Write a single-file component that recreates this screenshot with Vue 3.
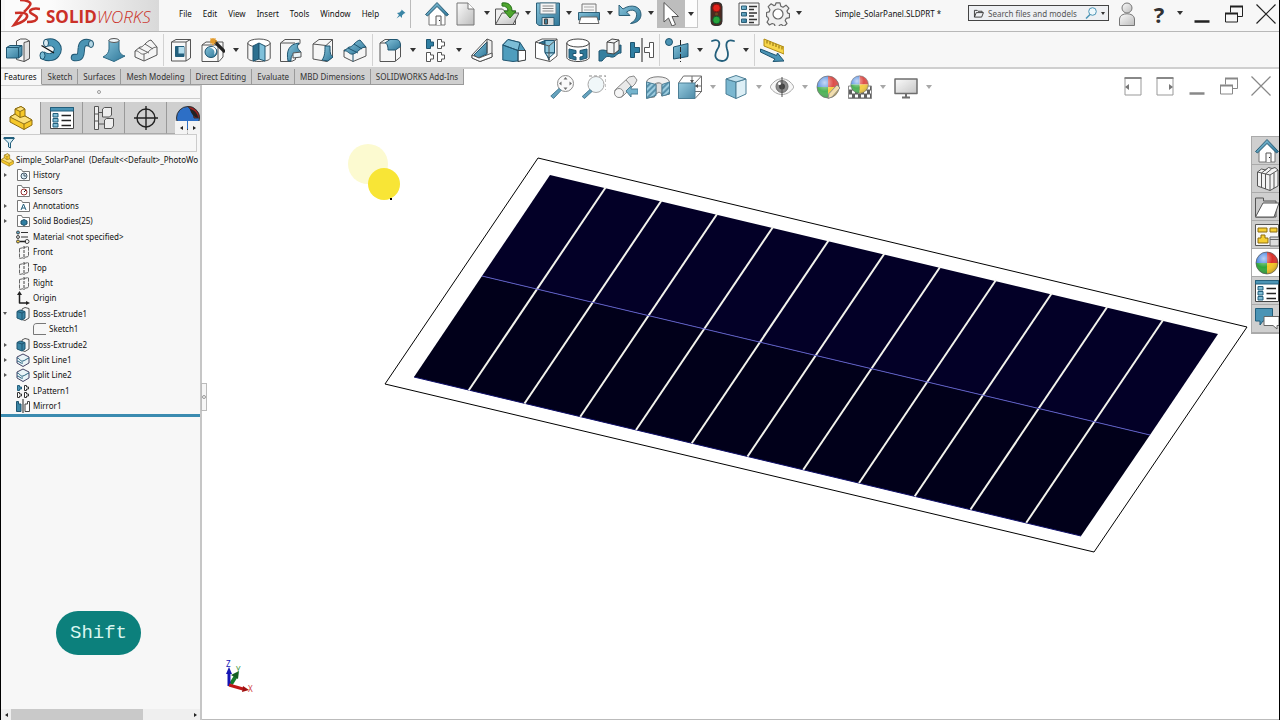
<script setup>
import { ref } from 'vue'

const menus = ['File', 'Edit', 'View', 'Insert', 'Tools', 'Window', 'Help']

const quickTools = [
  { icon: 'home', label: 'Home', wide: true },
  { icon: 'doc', label: 'New', menu: true },
  { icon: 'open', label: 'Open', menu: true },
  { icon: 'save', label: 'Save', menu: true },
  { icon: 'print', label: 'Print', menu: true },
  { icon: 'undo', label: 'Undo', menu: true },
  { icon: 'cursor', label: 'Select', menu: true, pressed: true },
  { icon: 'traffic', label: 'Rebuild', wider: true },
  { icon: 'props', label: 'File properties', wide: true },
  { icon: 'gear', label: 'Options', menu: true }
]

const commands = [
  { icon: 'extrude', label: 'Extruded boss' },
  { icon: 'revolve', label: 'Revolved boss' },
  { icon: 'sweep', label: 'Swept boss' },
  { icon: 'loft', label: 'Lofted boss' },
  { icon: 'boundary', label: 'Boundary boss', sep: true },
  { icon: 'cutExtrude', label: 'Extruded cut' },
  { icon: 'hole', label: 'Hole wizard', menu: true },
  { icon: 'cutRevolve', label: 'Revolved cut' },
  { icon: 'cutSweep', label: 'Swept cut' },
  { icon: 'cutLoft', label: 'Lofted cut' },
  { icon: 'cutBoundary', label: 'Boundary cut', sep: true },
  { icon: 'fillet', label: 'Fillet', menu: true },
  { icon: 'pattern', label: 'Linear pattern', menu: true },
  { icon: 'rib', label: 'Rib' },
  { icon: 'draft', label: 'Draft' },
  { icon: 'shell', label: 'Shell' },
  { icon: 'wrap', label: 'Wrap' },
  { icon: 'intersect', label: 'Intersect' },
  { icon: 'mirror', label: 'Mirror', sep: true },
  { icon: 'refGeom', label: 'Reference geometry', menu: true },
  { icon: 'curves', label: 'Curves', menu: true, sep: true },
  { icon: 'instant', label: 'Instant3D' }
]

const tabs = ['Features', 'Sketch', 'Surfaces', 'Mesh Modeling', 'Direct Editing', 'Evaluate', 'MBD Dimensions', 'SOLIDWORKS Add-Ins']
const activeTab = ref('Features')

const viewTools = [
  { icon: 'zoomFit', label: 'Zoom to fit' },
  { icon: 'zoomArea', label: 'Zoom to area' },
  { icon: 'prevView', label: 'Previous view' },
  { icon: 'section', label: 'Section view' },
  { icon: 'orient', label: 'View orientation', menu: true },
  { icon: 'style', label: 'Display style', menu: true },
  { icon: 'eye', label: 'Hide/show items', menu: true },
  { icon: 'appearance', label: 'Edit appearance' },
  { icon: 'scene', label: 'Apply scene', menu: true },
  { icon: 'monitor', label: 'View settings', menu: true }
]

const windowTools = [
  { icon: 'paneLeft', label: 'Collapse left' },
  { icon: 'paneRight', label: 'Collapse right' },
  { icon: 'minimize', label: 'Minimize document' },
  { icon: 'restore', label: 'Restore document' },
  { icon: 'close', label: 'Close document' }
]

const panelTabs = [
  { icon: 'part', label: 'Feature tree' },
  { icon: 'list', label: 'Properties' },
  { icon: 'config', label: 'Configurations' },
  { icon: 'target', label: 'Dimensions' },
  { icon: 'display', label: 'Display' }
]

const taskTabs = [
  { icon: 'home', label: 'Resources' },
  { icon: 'library', label: 'Design library' },
  { icon: 'folder', label: 'File explorer' },
  { icon: 'palette', label: 'View palette' },
  { icon: 'sphere', label: 'Appearances', active: true },
  { icon: 'list', label: 'Custom properties' },
  { icon: 'forum', label: 'Forum' }
]

const tree = [
  { name: 'History', icon: 'tHistory', arrow: 'closed' },
  { name: 'Sensors', icon: 'tSensors' },
  { name: 'Annotations', icon: 'tNotes', arrow: 'closed' },
  { name: 'Solid Bodies(25)', icon: 'tBodies', arrow: 'closed' },
  { name: 'Material <not specified>', icon: 'tMaterial' },
  { name: 'Front', icon: 'tPlane' },
  { name: 'Top', icon: 'tPlane' },
  { name: 'Right', icon: 'tPlane' },
  { name: 'Origin', icon: 'tOrigin' },
  { name: 'Boss-Extrude1', icon: 'tBoss', arrow: 'open' },
  { name: 'Sketch1', icon: 'tSketch', child: true },
  { name: 'Boss-Extrude2', icon: 'tBoss', arrow: 'closed' },
  { name: 'Split Line1', icon: 'tSplit', arrow: 'closed' },
  { name: 'Split Line2', icon: 'tSplit', arrow: 'closed' },
  { name: 'LPattern1', icon: 'tPattern' },
  { name: 'Mirror1', icon: 'tMirror' }
]

// solar panel: 11 gaps between the 12 cell columns
const gaps = Array.from({ length: 11 }, (_, i) => {
  const t = (i + 1) / 12
  return {
    x1: 550 + t * 669,
    y1: 174 + t * 159,
    x2: 413 + t * 669,
    y2: 377 + t * 159
  }
})

const ball = `
  <g stroke="none"><path fill="#3d7fe0" d="M12 12V1A11 11 0 0 0 1 12z"/><path fill="#d8322c" d="M12 12V1a11 11 0 0 1 11 11z"/>
  <path fill="#2fa53a" d="M12 12H1a11 11 0 0 0 11 11z"/><path fill="#f4c522" d="M12 12h11a11 11 0 0 1-11 11z"/>
  <circle cx="12" cy="12" r="11" fill="url(#shine)"/></g><circle cx="12" cy="12" r="11" stroke="#555" stroke-width=".7"/>`

const folderTop = '<path fill="#fff" stroke="#777" d="M1.5 12.5V1.5h4l1 2h7v9z"/>'

const icons = {
  home: '<path fill="#fff" stroke="#777" d="M4 12v11h16V12l-8-8z"/><path fill="#fafafa" stroke="#555" d="M11 23v-9h5v9"/><path stroke="#222" d="M14.500 18v1"/><path fill="url(#blue)" stroke="#2d5f77" d="M0.500 12.500L12 0.500l11.500 12-2 1.500L12 4.500 2.500 14z"/>',
  doc: '<path fill="url(#grey)" stroke="#777" d="M3 1h11l6 6v16H3z"/><path fill="#fff" stroke="#777" d="M14 1v6h6"/>',
  open: '<path fill="#eee" stroke="#555" d="M0.500 22.500V7h7l2 2h11v13.500z"/><path fill="url(#grey)" stroke="#555" d="M0.500 22.500L7 11h17l-6 11.500z"/><path fill="#4fa62e" stroke="#26701a" d="M7 1c6-1 10 2 10 8h4l-6 7-6-7h4c0-3-2-5-6-5z"/>',
  save: '<path fill="url(#blue)" stroke="#2d5f77" d="M0.500 1h23v22.500H3l-2.500-2z"/><path fill="#f5f5f5" stroke="#5b7f90" d="M4 1h16v11H4z"/><path stroke="#888" d="M6.500 4h11M6.500 6.500h11M6.500 9h11"/><path fill="#ddd" stroke="#2d5f77" d="M6 15.500h12v8H6z"/><path fill="#3f7e99" d="M8.500 17h3v5h-3z"/>',
  print: '<path fill="#f6f6f6" stroke="#777" d="M5 11V2h14v9"/><path stroke="#aaa" d="M7 5h10M7 8h10"/><path fill="url(#blue)" stroke="#2d5f77" d="M1.500 10.500h21V18h-21z"/><path fill="#fff" stroke="#666" d="M4 15h16l2 6.500H2z"/>',
  undo: '<path fill="url(#blue)" stroke="#2d5f77" d="M1 3v10.500h11L8.500 10c6-4 11-1 10 4-.5 3-2 5-6 7.500C20 21 23 17 23 12.500 23 4 13 1.500 5 7z"/>',
  cursor: '<path fill="#fff" stroke="#555" d="M5 .5v19.500l4.500-4 3.500 8 3.500-1.500L13 14.500h6.500z"/>',
  traffic: '<rect x="7" y="0.500" width="11" height="23" rx="4" fill="#4d2a20" stroke="#333"/><circle cx="12.500" cy="6" r="3.800" fill="#e2231a" stroke="#811"/><circle cx="12.500" cy="12" r="1.500" fill="#6b4b20" stroke="none"/><circle cx="12.500" cy="18" r="3.800" fill="#27a53b" stroke="#153"/>',
  props: '<path fill="#f7f7f7" stroke="#555" d="M2 1h20v22H2z"/><path fill="url(#blue)" stroke="#2d5f77" d="M4.500 4h5v3.500h-5zM4.500 10.500h5V14h-5zM4.500 17h5v3.500h-5z"/><path stroke="#333" stroke-width="1.300" d="M12 4.500h8M12 7.500h5M12 11h8M12 14h5M12 17.500h8M12 20.500h5"/>',
  gear: '<path fill="#f0f0f0" stroke="#666" stroke-width="1.200" d="M10 .8h4l.8 3.400 2.200 1 3-2 2.900 2.900-2 3 1 2.100 1.600.4v4l-3.300.8-1 2.200 1.800 2.900-2.900 2.900-2.800-1.900-1.800.7-.7 1.500h-3.600l-.8-2.400-2.200-.8-2.800 1.500L1 20.200l1.700-3-.9-2L.5 14.500v-4l2.600-.6.9-2.200-1.800-3L5 1.800l2.800 1.800 1.600-.6z"/><circle cx="12" cy="12" r="5" fill="#fff" stroke="#666" stroke-width="1.200"/>',
  user: '<circle cx="12" cy="6" r="5" fill="url(#grey)" stroke="#777"/><path fill="url(#grey)" stroke="#777" d="M4.500 23.500V17c0-7 15-7 15 0v6.500z"/>',

  extrude: '<path fill="#f6f6f6" stroke="#555" d="M10.500 3l4-2H20l3.500 2v17.500L18 23.500l-7.500-2z"/><path fill="#e2e2e2" stroke="#555" d="M18 4.500L23.500 3v17.500L18 23.500z"/><path fill="url(#blue)" stroke="#1f5570" d="M.5 9.500L4 7.500h12v10L12.500 20H.5z"/><path stroke="#1f5570" d="M.5 9.500h12V20M12.500 9.500l3.500-2"/>',
  revolve: '<path stroke="#1f5570" stroke-width="8" d="M8 5c9-3 15 5 10 11-3 4-9 4-14 1"/><path stroke="#4a97b8" stroke-width="6.200" d="M8 5c9-3 15 5 10 11-3 4-9 4-14 1"/><ellipse cx="8" cy="5" rx="2.500" ry="3.700" fill="#dcebf2" stroke="#1f5570"/><ellipse cx="4.500" cy="17.500" rx="2.500" ry="3.700" fill="#7cbdd6" stroke="#1f5570"/><path stroke="#111" stroke-width="1.300" d="M3.500 7.500L16 15"/>',
  sweep: '<path stroke="#1f5570" stroke-width="7.500" stroke-linecap="round" d="M4.500 19.500c8 1 6-5 7-10 .5-4 3-6 8-4.500"/><path stroke="#4a93b3" stroke-width="5.700" stroke-linecap="round" d="M4.500 19.500c8 1 6-5 7-10 .5-4 3-6 8-4.500"/><ellipse cx="21" cy="6" rx="2.500" ry="3.500" fill="#b5d8e6" stroke="#1f5570"/>',
  loft: '<path fill="url(#blue)" stroke="#2d6984" d="M7 2v9c0 3-2 6-6 8l11 4.500L23 18c-4-1-6-4-6-7V2z"/><ellipse cx="12" cy="2.500" rx="5" ry="2" fill="#eef6fa" stroke="#555"/>',
  boundary: '<path fill="#f5f5f5" stroke="#555" d="M1 13l5-4c3 1 6-6 11-7l6 7v8L10 23 1 19z"/><path stroke="#666" d="M1 13c4-1 5 4 9 3 5-1 7-7 13-7M10 16v7M5 10l10 5M11 6l8 5"/>',
  cutExtrude: '<path fill="#f8f8f8" stroke="#555" d="M2.500 4L7 1.500h14.500V20L17 23H2.500z"/><path stroke="#555" d="M2.500 4H17v19M17 4l4.500-2.500"/><path fill="#235f7c" stroke="#235f7c" d="M6.500 8.500H15v10H6.500z"/><path fill="#b3dcec" stroke="none" d="M9.500 9H15v6.500H9.500z"/>',
  hole: '<path fill="#f8f8f8" stroke="#555" d="M1 7l4-3h17v15l-4 4.500H1z"/><path stroke="#555" d="M1 7h16v16"/><ellipse cx="10" cy="14" rx="6" ry="5.500" fill="url(#blue)" stroke="#1f5570"/><path fill="#fff" stroke="none" d="M7 10c4-1 8 2 6 7 3-2 3-8-2-8z"/><path stroke="#222" stroke-width="3.200" d="M13 3l11 11"/><path stroke="#e29a2b" stroke-width="1.500" d="M12 0v7M9 3h7M9.500 .5l5 5M14.500 .5l-5 5"/>',
  cutRevolve: '<path fill="#f6f6f6" stroke="#555" d="M.8 5v15c0 2 5 3.500 11.200 3.500s11.200-1.500 11.200-3.500V5z"/><ellipse cx="12" cy="5" rx="11.200" ry="4" fill="#fff" stroke="#555"/><path fill="#2c6f8e" stroke="#1f5570" d="M12 5v16l-6 2V8z"/><path fill="#7fc0da" stroke="#1f5570" d="M12 5v16l6 2V8z"/>',
  cutSweep: '<path fill="#f6f6f6" stroke="#555" d="M1.500 5L6 1.500h15v4l-4.500 3v13l-4 2h-11z"/><path stroke="#555" d="M1.500 5H16"/><path fill="url(#blue)" stroke="#1f5570" d="M9 23C7 13 10 6 20 5c-3 4-1 6 2 9l-5 2c-4 0-5 2-5 7z"/><path fill="#e9f3f7" stroke="#555" d="M14 15l8-1v5l-8 1z"/>',
  cutLoft: '<path fill="#f6f6f6" stroke="#555" d="M2 6l6-4.500h13.500V19L16 23.500 2 21z"/><path stroke="#555" d="M2 6l13 1.500 6.500-6M15 7.500v16"/><path fill="url(#blue)" stroke="#1f5570" d="M14 8h5c0 6 0 9 3 11l-5 4-6-1c3-4 3-9 3-14z"/>',
  cutBoundary: '<path fill="#f5f5f5" stroke="#555" d="M1 12v7l9 4.500L23 18V9z"/><path fill="url(#blue)" stroke="#1f5570" d="M1 13l5-4c3 1 6-6 11-7l6 7c-6 0-8 6-13 7-4 1-5-4-9-3z"/><path stroke="#1f5570" d="M5 10l10 5M11 6l8 5M10 16v7.500"/>',
  fillet: '<path fill="#f6f6f6" stroke="#555" d="M2 5l5-3.500h11L22.500 6v13L17 23.500H2z"/><path fill="url(#blue)" stroke="#1f5570" d="M7 5l5-3.500h6c3 0 4.500 2 4.500 7l-5 3.500H10c0-4-1-7-3-7z"/><path stroke="#555" d="M2 5h5M17.500 12v11"/>',
  pattern: '<path fill="#2f7fa3" stroke="#1f5570" d="M2.500 1.500h4V4h3v4h-3v2.500h-4z"/><path fill="#fff" stroke="#555" d="M13.500 1.500h4V4h3v4h-3v2.500h-4zM2.500 14.500h4V17h3v4h-3v2.500h-4zM13.500 14.500h4V17h3v4h-3v2.500h-4z"/>',
  rib: '<path fill="#eee" stroke="#555" d="M2 17L17 1l5 2v16L10 23.500 2 20z"/><path fill="url(#blue)" stroke="#1f5570" d="M4 17L17 4v12l-9 4z"/><path fill="#fff" stroke="#555" d="M2 17l7 3 13-5v4L10 23.500 2 20zM17 1v14"/>',
  draft: '<path fill="#4f9dbd" stroke="#1f5570" d="M.8 7L6 1.500l12 3L23.500 13v9L11 23.500.8 22z"/><path fill="#7cbdd6" stroke="#1f5570" d="M.8 7L6 1.500 18 4.500l-2 8z"/><path fill="#fff" stroke="#444" d="M16 12.500h7.500v9.500L16 23.500z"/><path stroke="#1f5570" d="M16 12.500v11M.8 7L16 12.500"/>',
  shell: '<path fill="#fff" stroke="#555" d="M1.500 4L8 1h15v17l-7 5.500L1.500 20z"/><path fill="#2e7391" stroke="#1f5570" d="M5 5l6-2.500v11L15 22V8z"/><path fill="#8cc7dd" stroke="#1f5570" d="M11 2.500h9.500V15H11z"/><path fill="#b5dcea" stroke="#1f5570" d="M11 15h9.500L15 20z"/><path stroke="#555" d="M1.500 4L15 8v15M15 8l8-7"/>',
  wrap: '<path fill="#fff" stroke="#444" d="M.8 5v14.500c0 2 5 4 11.200 4s11.200-2 11.200-4V5z"/><ellipse cx="12" cy="5" rx="11.200" ry="4" fill="#fff" stroke="#444"/><path fill="#2d7899" stroke="#1f5570" d="M3 11l7 1.500v3H7v3l3 .5v3l-7-2zM21 11l-7 1.500v3h3v3l-3 .5v3l7-2z"/>',
  intersect: '<path fill="#367f9f" stroke="#1f5570" d="M1 13c5-3 8 2 12-2s6-3 10-4v8c-5 0-5 5-10 4-5-2-6 1-9 4H1z"/><path fill="#f4f4f4" stroke="#444" d="M9 4l5-3 7 1v10l-5 4-7-1z"/><path stroke="#444" d="M9 4l7 1v11M16 5l5-3"/>',
  mirror: '<path fill="#2f7fa3" stroke="#1f5570" d="M.5 4.500h4v5h5v5h-5v5h-4z"/><path fill="#fff" stroke="#555" d="M23.500 4.500h-4v5h-5v5h5v5h4z"/><path stroke="#222" d="M12 0v24"/>',
  refGeom: '<circle cx="4" cy="4" r="3.500" fill="#4b94b5" stroke="#1f5570"/><path fill="url(#blue)" stroke="#1f5570" d="M8.500 9L23 5.500v13L8.500 21z"/><path stroke="#222" stroke-dasharray="5 2" d="M15.500 2v22"/>',
  curves: '<path stroke="#235f7c" stroke-width="1.800" stroke-linecap="round" d="M1 3c8-3 9 3 5 9-4 7 0 11 5 11 6 0 7-6 5-12-2-7 1-10 7-8"/>',
  instant: '<path fill="#f7d64b" stroke="#b08b15" d="M4 1l20 8v7L4 8z"/><path stroke="#8b6b0b" d="M7 2.500v3M10 3.500v3M13 5v3M16 6v3M19 7.500v3M22 8.500v3"/><path fill="#4b94b5" stroke="#1f5570" d="M.5 11l16 6.500 1-2.500 6.500 8-11 .5 2-2.500L.5 14z"/>',

  zoomFit: '<circle cx="15.500" cy="8.500" r="8" fill="#fafafa" stroke="#777"/><path fill="#555" stroke="none" d="M15.500 2l2 2.500h-4zM15.500 15l2-2.500h-4zM9 8.500L11.500 6.500v4zM22 8.500l-2.500-2v4z"/><path fill="#4b94b5" stroke="#2d6984" d="M9 13.500l2 2-7.500 8L.8 21z"/>',
  zoomArea: '<path stroke="#777" stroke-dasharray="3 2" d="M7 1h17v14"/><circle cx="14" cy="9.500" r="8" fill="#eef6f9" stroke="#999"/><path fill="#4b94b5" stroke="#2d6984" d="M8 14.500l2 2-7.500 7L.2 21.500z"/>',
  prevView: '<path fill="#e6e6e6" stroke="#777" d="M1 15L15 2l5-1 3 4-2 4-12 12c-4 4-10-1-8-6z"/><circle cx="5" cy="18" r="4.500" fill="#f5f5f5" stroke="#777"/><path stroke="#777" d="M12 5l6 7"/><path fill="#5da7c5" stroke="#2d6984" d="M12 16l5-5v3h7v5h-7v3z"/>',
  section: '<path fill="#eee" stroke="#666" d="M.5 7C1 0 23 0 23.500 7v12l-8 2V9.500c-1-2-6-2-7 0V22l-8 1z"/><path fill="#d8d8d8" stroke="#777" d="M10 9.500c1-2 5-2 6 0V19l-3-2-3 2z"/><path fill="url(#hatch)" stroke="#2d6984" d="M.5 7L10 9.500v11L.5 23.500zM16 9.500L23.500 7v12L16 21z"/>',
  orient: '<path stroke="#555" d="M5.500 1h18v16M.5 8l5-7M17 8l6.500-7M17 23.500l6.500-7H17M14 1v7M24 11h-7"/><path fill="url(#blue)" stroke="#2d6984" d="M.5 8H17v15.500H.5z"/><path fill="#333" stroke="none" d="M14 8l-2-3h4zM17 11l3-2v4z"/>',
  style: '<path fill="#63abc8" stroke="#2d6984" d="M2 4l10 3v16.500L2 19z"/><path fill="#d8edf5" stroke="#2d6984" d="M12 7l10-3v15l-10 4.500z"/><path fill="#b8dcea" stroke="#2d6984" d="M2 4l10-3.500L22 4 12 7z"/>',
  eye: '<path fill="#f6f6f6" stroke="#999" d="M0 12c6-11 18-11 24 0-6 10-18 10-24 0z"/><circle cx="12" cy="11.500" r="6" fill="#777" stroke="#555"/><circle cx="12" cy="11.500" r="3" fill="#222" stroke="none"/><circle cx="9.500" cy="8.500" r="1.500" fill="#fff" stroke="none"/><path stroke="#333" d="M12 2v20"/>',
  sphere: ball,
  appearance: ball + '<path fill="#f0d9a0" stroke="#777" d="M12 23.500l1-5L21 10l3 3-8 9z"/>',
  scene: '<path fill="#444" stroke="#777" d="M.5 11h23v12.500H.5z"/><path stroke="#fff" stroke-width="3" stroke-dasharray="3 3" d="M1 13h22M4 17h19M1 21h22"/><g transform="translate(2 0) scale(.8)">' + ball + '</g>',
  monitor: '<path fill="url(#grey)" stroke="#555" stroke-width="1.500" d="M1 4h22v14.500H1z"/><path stroke="#555" stroke-width="2" d="M12 19v3M8 22.500h8"/>',
  paneLeft: '<path stroke="#999" d="M4 4h16v17H4z"/><path stroke="#888" stroke-width="2" d="M3.500 4h17"/><path fill="#777" stroke="none" d="M4 13l4-3v6z"/>',
  paneRight: '<path stroke="#999" d="M4 4h16v17H4z"/><path stroke="#888" stroke-width="2" d="M3.500 4h17"/><path fill="#777" stroke="none" d="M20 13l-4-3v6z"/>',
  minimize: '<path stroke="currentColor" stroke-width="2.500" d="M4.500 19.500h15"/>',
  restore: '<path stroke="currentColor" d="M8.500 10.500V4.500h12v10h-5"/><path stroke="currentColor" stroke-width="2" d="M8 4.500h13M3 11.500h13"/><path stroke="currentColor" d="M3.500 11v9h12v-9"/>',
  close: '<path stroke="currentColor" stroke-width="1.200" d="M2.500 2.500l19 19M21.500 2.500l-19 19"/>',

  part: '<path fill="#f6c829" stroke="#8d6d12" d="M1 11l5-3V3l6-2.500L16 3v7l7 4v5l-8 4.500L1 16z"/><path fill="#fbe07b" stroke="#8d6d12" d="M6 3l6-2.500L16 3l-5 2.500zM1 11l5-3 5 3.500 5-1.500 7 4-8 4z"/><path stroke="#8d6d12" d="M11 5.500v6M15 18v5.500"/>',
  list: '<path fill="#fff" stroke="#444" d="M.5 1.500h23v21H.5z"/><path fill="#4b94b5" stroke="#235f7c" d="M.5 1.500h23V5H.5z"/><path fill="#7fbdd6" stroke="#235f7c" d="M3 7.500h5v3.500H3zM3 12.500h5V16H3zM3 17.500h5V21H3z"/><path stroke="#222" stroke-width="1.400" d="M11.500 9.500H21M11.500 14.500H21M11.500 19.500H21"/>',
  config: '<path fill="#eee" stroke="#555" d="M2.500 .5h4v23h-4z"/><path fill="#eee" stroke="#555" d="M10.500 3l2-1.500h7V9l-2 2h-7zM12.500 14l2-1.500h7V20l-2 2.500h-7z"/><path stroke="#555" d="M6.500 6.500h4M6.500 18h6M2.500 8h4M2.500 15h4"/>',
  target: '<circle cx="12" cy="12" r="9" stroke="#222" stroke-width="1.400"/><path stroke="#222" stroke-width="1.400" d="M12 0v24M0 12h24"/>',
  display: '<circle cx="12" cy="12" r="11.500" fill="#2d6fc6" stroke="#333"/><path fill="#a32020" stroke="#333" d="M12 .5A11.500 11.500 0 0 1 23.500 12H18c0-4-3-8-6-11.500z"/><path fill="#222" stroke="none" d="M14 3c5 1 8 5 8 9-4-1-7-4-8-9z"/>',
  library: '<path fill="#f3f3f3" stroke="#555" d="M2.500 5l4-3 4 1 3-2.500 3.500 1L20 .500 23 3v16l-8 4.500L2.500 19z"/><path stroke="#555" d="M2.500 5L15 8l8-5M15 8v15.500M6.500 6v14.500M10.500 7v15M6.500 6l5-4M10.500 7l6-5M19 6v15"/>',
  folder: '<path fill="#c9c9c9" stroke="#555" d="M.5 22V3h8v3H21v16z"/><path fill="#fff" stroke="#555" d="M.5 22L8 8h16l-5 14z"/>',
  palette: '<path fill="#f7f7f7" stroke="#555" d="M.5 1.500h23v21H.5z"/><path fill="#f6cf32" stroke="#8d6d12" d="M3 5h9v4H3zM15 5h7v4h-7zM6 12h4v3h3v5H3v-5h3z"/><path fill="#ddd" stroke="#666" d="M15 14h9v9h-9z"/><path stroke="#666" d="M15 16.500h9"/>',
  forum: '<path fill="#4b94b5" stroke="#235f7c" d="M.5 1.500h17V14H8l-3 4v-4H.5z"/><path fill="#fff" stroke="#666" d="M9 9.500h15v9h-2V22l-4-3.500H9z"/>'
}

const treeIcons = {
  tHistory: folderTop + '<circle cx="8" cy="8" r="3" fill="#dceef5" stroke="#456"/><path stroke="#456" d="M8 6v2h2"/>',
  tSensors: folderTop + '<circle cx="8" cy="8" r="3" fill="#fff" stroke="#933"/><path stroke="#222" d="M8 8l2-2"/>',
  tNotes: folderTop + '<path stroke="#235f7c" d="M5 11l2.500-6L10 11M6 9h3"/>',
  tBodies: folderTop + '<path fill="#2f7fa3" stroke="#1f4f66" d="M5 7l3-1.500L11 7v3l-3 1.500L5 10z"/>',
  tMaterial: '<path stroke="#333" d="M5 2.500h7M5 7h7"/><path stroke="#222" stroke-width="1.500" d="M4 11.500h6"/><circle cx="2" cy="2.500" r="1.500" fill="#5da7c5"/><circle cx="2" cy="7" r="1.500" fill="#ddd"/><circle cx="2" cy="11.500" r="1.500" fill="#f2cc3a"/><circle cx="11" cy="11.500" r="2"/>',
  tPlane: '<path stroke="#666" d="M3.500 3.500v10l9-2v-10z" stroke-dasharray="4 1"/><path stroke="#444" d="M8 1v13" stroke-dasharray="3 1"/>',
  tOrigin: '<path stroke="#222" stroke-width="1.500" d="M3.500 3v9H12"/><path fill="#222" stroke="none" d="M3.500 0L6 4H1zM14 12l-4-2v4z"/>',
  tBoss: '<path fill="#f6f6f6" stroke="#555" d="M6 2l3-1.500 4 1V11l-4 2.500-3-1z"/><path fill="#3a85a5" stroke="#1f5570" d="M1 4.500L4 3l5 1.500V11l-3 2-5-2z"/><path stroke="#1f5570" d="M1 4.500L6 6v6.500M6 6l3-1.500"/>',
  tSketch: '<path stroke="#777" d="M14 1.500H5C2 1.500 1.500 3 1.500 5v7.500H14"/>',
  tSplit: '<path fill="#e9f3f7" stroke="#446" d="M1 4l6-3 6 3v6l-6 3.500L1 10z"/><path stroke="#235f7c" d="M1 5c3 0 3 4 6 3s3-2 6-3M1 8c3 0 3 3 6 2"/>',
  tPattern: '<path fill="#4b94b5" stroke="#235f7c" d="M1.500 1.500h2V3h2v2h-2v1.500h-2z"/><path fill="#fff" stroke="#333" d="M8.500 1.500h2V3h2v2h-2v1.500h-2zM1.500 8.500h2V10h2v2h-2v1.500h-2zM8.500 8.500h2V10h2v2h-2v1.500h-2z"/>',
  tMirror: '<path fill="#3a85a5" stroke="#1f5570" d="M.5 2.500h2V5H5v7.500H.5z"/><path fill="#fff" stroke="#444" d="M13.500 2.500h-2V5H9v7.500h4.500z"/><path stroke="#222" d="M7 0v14"/>'
}
</script>

<template>
  <div class="app">
    <!-- shared paint -->
    <svg class="defs" width="0" height="0" aria-hidden="true">
      <defs>
        <linearGradient id="blue" x1="0" y1="0" x2="1" y2="1">
          <stop offset="0" stop-color="#86c3da" />
          <stop offset="1" stop-color="#2f7799" />
        </linearGradient>
        <linearGradient id="grey" x1="0" y1="0" x2="1" y2="1">
          <stop offset="0" stop-color="#fbfbfb" />
          <stop offset="1" stop-color="#bcbcbc" />
        </linearGradient>
        <radialGradient id="shine" cx=".35" cy=".3" r=".8">
          <stop offset="0" stop-color="#fff" stop-opacity=".65" />
          <stop offset=".5" stop-color="#fff" stop-opacity="0" />
          <stop offset="1" stop-color="#000" stop-opacity=".3" />
        </radialGradient>
        <pattern id="hatch" width="4" height="4" patternUnits="userSpaceOnUse" patternTransform="rotate(45)">
          <rect width="4" height="4" fill="#8cc4da" />
          <rect width="2" height="4" fill="#3c7f9e" />
        </pattern>
      </defs>
    </svg>

    <!-- Title bar -->
    <header class="titlebar">
      <div class="brand">
        <svg class="brand-mark" viewBox="0 0 29 27" aria-hidden="true">
          <path d="M9 0c6 0 12 2 10 5-1 2-3 4-6 7" />
          <path d="M4 13c8-1 13 0 12 4-1 3-6 6-13 8l8-11" />
          <path d="M29 9c-6-1-10 0-10 3 0 2 7 3 7 6 0 3-5 4-10 4" />
        </svg>
        <span class="brand-name"><b>SOLID</b><i>WORKS</i></span>
      </div>
      <nav class="menus">
        <button v-for="m in menus" :key="m" type="button">{{ m }}</button>
        <button class="pin" type="button" aria-label="Pin menu">
          <svg viewBox="0 0 10 10" width="10" height="10">
            <path fill="#3a85a5" d="M5.500.5l4 3.500-1.500.5-2 2L6 9 4 7 .5 9.500 3 6 1 4l2.500-.500 2-2z" />
          </svg>
        </button>
      </nav>
      <div class="quick">
        <template v-for="t in quickTools" :key="t.icon">
          <button class="tool" :class="{ wide: t.wide, wider: t.wider, pressed: t.pressed }" type="button" :aria-label="t.label">
            <svg class="glyph" viewBox="0 0 24 24" v-html="icons[t.icon]"></svg>
          </button>
          <button v-if="t.menu" class="drop" :class="{ boxed: t.pressed }" type="button" :aria-label="t.label + ' menu'"></button>
        </template>
      </div>
      <div class="title">Simple_SolarPanel.SLDPRT *</div>
      <div class="search">
        <svg viewBox="0 0 12 10" width="11" height="9" aria-hidden="true">
          <path fill="none" stroke="#333" d="M1.500 9V1.500h3l1 1H10V4M1.500 9l2-5h8l-2 5z" />
        </svg>
        <input type="text" placeholder="Search files and models" aria-label="Search files and models" />
        <button class="search-go" type="button" aria-label="Search">
          <svg viewBox="0 0 12 12" width="12" height="12">
            <circle cx="7.500" cy="4.500" r="3.800" fill="#eef8fc" stroke="#4b94b5" />
            <path stroke="#4b94b5" stroke-width="1.500" d="M5 7.500l-4 4" />
          </svg>
        </button>
        <button class="search-drop" type="button" aria-label="Search scope"></button>
      </div>
      <div class="window-buttons">
        <button class="tool wider" type="button" aria-label="Sign in">
          <svg class="glyph" viewBox="0 0 24 24" v-html="icons.user"></svg>
        </button>
        <button class="tool help" type="button" aria-label="Help">?</button>
        <button class="drop" type="button" aria-label="Help menu"></button>
        <button v-for="n in ['minimize', 'restore', 'close']" :key="n" class="tool frame" type="button" :aria-label="n">
          <svg class="glyph" viewBox="0 0 24 24" v-html="icons[n]"></svg>
        </button>
      </div>
    </header>

    <!-- Feature commands -->
    <div class="commands">
      <template v-for="c in commands" :key="c.icon">
        <button class="command" type="button" :aria-label="c.label">
          <svg class="glyph" viewBox="0 0 24 24" v-html="icons[c.icon]"></svg>
        </button>
        <button v-if="c.menu" class="drop" type="button" :aria-label="c.label + ' menu'"></button>
        <span v-if="c.sep" class="sep"></span>
      </template>
    </div>

    <main class="workspace">
      <nav class="tabs">
        <button
          v-for="t in tabs"
          :key="t"
          type="button"
          :class="{ active: activeTab === t }"
          @click="activeTab = t"
        >{{ t }}</button>
      </nav>

      <!-- Feature manager -->
      <aside class="sidebar">
        <div class="splitter"><span></span></div>
        <div class="panel-tabs">
          <button v-for="(p, i) in panelTabs" :key="p.icon" type="button" :class="{ active: i === 0 }" :aria-label="p.label">
            <svg class="glyph" viewBox="0 0 24 24" v-html="icons[p.icon]"></svg>
          </button>
          <div class="tab-scroll">
            <button class="left" type="button" aria-label="Scroll tabs left"></button>
            <button class="right" type="button" aria-label="Scroll tabs right"></button>
          </div>
        </div>
        <div class="filter">
          <svg viewBox="0 0 12 12" width="12" height="12" aria-hidden="true">
            <path fill="#d5ecf5" stroke="#235f7c" d="M.5 1h11L7.500 6v5l-2-1V6z" />
            <path stroke="#235f7c" stroke-width="2" d="M1 1h10" />
          </svg>
          <input type="text" aria-label="Filter tree" />
        </div>
        <ul class="tree">
          <li class="root">
            <svg class="glyph" viewBox="0 0 24 24" v-html="icons.part"></svg>
            <span>Simple_SolarPanel&nbsp; (Default&lt;&lt;Default&gt;_PhotoWo</span>
          </li>
          <li v-for="n in tree" :key="n.name" :class="{ child: n.child }">
            <span class="twist" :class="n.arrow"></span>
            <svg class="glyph" viewBox="0 0 14 14" v-html="treeIcons[n.icon]"></svg>
            <span>{{ n.name }}</span>
          </li>
        </ul>
        <div class="rollback"></div>
        <div class="keycast">Shift</div>
        <div class="scrollbar">
          <button class="left" type="button" aria-label="Scroll left"></button>
          <div class="track"><div class="thumb"></div></div>
          <button class="right" type="button" aria-label="Scroll right"></button>
        </div>
        <button class="handle" type="button" aria-label="Collapse panel"></button>
      </aside>

      <!-- Graphics area -->
      <section class="viewport">
        <svg class="model" viewBox="202 69 1077 650" aria-hidden="true">
          <circle cx="368" cy="164" r="20" fill="#fcfad0" />
          <circle cx="384" cy="184" r="16" fill="#f8e536" />
          <rect x="390" y="198" width="2" height="2" fill="#000" />
          <path d="M538 158L1247 327L1094 552L385 384z" fill="#fff" stroke="#000" />
          <path d="M550 175L1218 334L1150 435L482 276z" fill="#030027" />
          <path d="M482 276L1150 435L1081 536L414 377z" fill="#01001a" />
          <path d="M414 377L1081 536" stroke="#10106a" />
          <line v-for="(g, i) in gaps" :key="i" v-bind="g" stroke="#f3f3ec" stroke-width="2" />
          <path d="M482 276L1150 435" stroke="#5c5cc4" />
        </svg>

        <div class="view-tools">
          <template v-for="v in viewTools" :key="v.icon">
            <button class="command" type="button" :aria-label="v.label">
              <svg class="glyph" viewBox="0 0 24 24" v-html="icons[v.icon]"></svg>
            </button>
            <button v-if="v.menu" class="drop" type="button" :aria-label="v.label + ' menu'"></button>
          </template>
        </div>

        <div class="doc-buttons">
          <button v-for="w in windowTools" :key="w.icon" class="command" type="button" :aria-label="w.label">
            <svg class="glyph" viewBox="0 0 24 24" v-html="icons[w.icon]"></svg>
          </button>
        </div>

        <div class="task-pane">
          <button v-for="t in taskTabs" :key="t.label" type="button" :class="{ active: t.active }" :aria-label="t.label">
            <svg class="glyph" viewBox="0 0 24 24" v-html="icons[t.icon]"></svg>
          </button>
        </div>

        <svg class="triad" viewBox="0 0 36 36" width="36" height="36" aria-hidden="true">
          <path stroke="#157a2a" stroke-width="4" d="M9 26l5-8" />
          <path fill="#145f22" d="M9 17l8-4-1 8z" />
          <path stroke="#1414b4" stroke-width="3" d="M7 28V14" />
          <path fill="#1414b4" d="M7 9l3 7H4z" />
          <path stroke="#c01818" stroke-width="3" d="M7 27l14 4" />
          <path fill="#a01010" d="M27 32l-7 2 1-6z" />
          <text x="4" y="9" fill="#1414b4">Z</text>
          <text x="14" y="15" fill="#4a9a4a">Y</text>
          <text x="26" y="34" fill="#d04040">X</text>
        </svg>
      </section>
    </main>
  </div>
</template>

<style>
html,
body,
#app {
  height: 100%;
  margin: 0;
}
</style>

<style scoped>
.app {
  height: 100%;
  box-sizing: border-box;
  display: flex;
  flex-direction: column;
  border: solid #000;
  border-width: 0 1px;
  background: #f7f7f7;
  color: #222;
  font-family: 'Noto Sans', 'Open Sans', sans-serif;
  font-size: 8px;
  line-height: 12px;
  overflow: hidden;
}

.defs {
  position: absolute;
}

button,
input {
  font: inherit;
  color: inherit;
  border: 0;
  padding: 0;
  margin: 0;
  background: none;
}

button {
  display: flex;
  align-items: center;
  justify-content: center;
  flex-shrink: 0;
}

.glyph {
  width: 24px;
  height: 24px;
  fill: none;
  stroke: #444;
  stroke-linejoin: round;
  flex-shrink: 0;
}

/* ===== Title bar ===== */
.titlebar {
  display: flex;
  align-items: stretch;
  height: 31px;
  flex-shrink: 0;
  padding-left: 4px;
  border-bottom: 1px solid #b8b8b8;
}

.brand {
  display: flex;
  width: 148px;
  padding-left: 6px;
  background: linear-gradient(90deg, #fbfbfb 30%, #d9d9d9);
}

.brand-mark {
  width: 29px;
  height: 27px;
  fill: none;
  stroke: #cb3027;
  stroke-width: 2.5;
}

.brand-name {
  margin-left: 6px;
  padding-top: 2px;
  color: #cb3027;
  font-family: 'Open Sans', 'Noto Sans', sans-serif;
  font-size: 17px;
  line-height: 30px;
}

.brand-name i {
  font-weight: 300;
}

.menus {
  display: flex;
  align-items: center;
  gap: 11px;
  width: 231px;
  height: 27px;
  padding-left: 20px;
  box-sizing: content-box;
  color: #111;
}

.menus .pin {
  margin-left: 6px;
}

.quick {
  display: flex;
  height: 28px;
  padding-left: 11px;
  border-left: 1px solid #bbb;
}

.tool {
  width: 28px;
  height: 27px;
}

.tool.wide {
  width: 30px;
}

.tool.wider {
  width: 36px;
}

.tool.pressed {
  height: 28px;
  background: #bdbdbd;
}

.drop {
  width: 13px;
  height: 26px;
}

.drop::before,
.search-drop::before {
  content: '';
  border: 3px solid transparent;
  border-top: 4px solid #333;
  border-bottom: 0;
}

.drop.boxed {
  height: 28px;
  box-sizing: border-box;
  border: solid #c8c8c8;
  border-width: 0 1px 1px 0;
  background: #fdfdfd;
}

.title {
  flex: 1;
  min-width: 100px;
  padding-left: 30px;
  line-height: 27px;
  white-space: nowrap;
  color: #111;
}

.search {
  display: flex;
  align-items: center;
  gap: 4px;
  width: 141px;
  height: 16px;
  box-sizing: border-box;
  margin-top: 5px;
  padding: 0 3px 0 4px;
  border: 1px solid #444;
  background: #eef0f3;
  flex-shrink: 0;
}

.search input {
  flex: 1;
  min-width: 0;
  height: 14px;
}

.search input::placeholder {
  color: #555;
  opacity: 1;
}

.search svg {
  fill: none;
}

.search-drop::before {
  border-width: 2px;
  border-top-width: 3px;
}

/* the close button runs under the window edge */
.window-buttons {
  display: flex;
  margin-right: -3px;
}

.window-buttons .help {
  color: #333;
  font-size: 22px;
  font-weight: 700;
  line-height: 30px;
}

.tool.frame {
  width: 32px;
  color: #222;
}

/* ===== Command bar ===== */
.commands {
  display: flex;
  align-items: center;
  height: 35px;
  flex-shrink: 0;
  padding-left: 1px;
  border-bottom: 2px solid #cfcfcf;
}

.command {
  width: 32px;
  height: 34px;
}

.commands .drop,
.view-tools .drop {
  width: 14px;
}

.sep {
  width: 1px;
  height: 32px;
  margin: 0 1px;
  background: #d2d2d2;
}

/* ===== Workspace ===== */
.workspace {
  position: relative;
  flex: 1;
  min-height: 0;
  display: flex;
}

.tabs {
  position: absolute;
  top: 0;
  left: 0;
  z-index: 2;
  display: flex;
  height: 16px;
}

.tabs button {
  padding: 0 5px;
  border: solid #9a9a9a;
  border-width: 0 1px 1px 0;
  background: #cfcfcf;
  color: #333;
}

.tabs button.active {
  padding: 0 5px 0 3px;
  border-bottom-color: #f7f7f7;
  background: #f7f7f7;
  color: #111;
}

/* ===== Sidebar ===== */
.sidebar {
  position: relative;
  display: flex;
  flex-direction: column;
  width: 199px;
  flex-shrink: 0;
  padding-top: 16px;
  border-right: 2px solid #c6c6c6;
}

.splitter {
  display: flex;
  align-items: center;
  justify-content: center;
  height: 12px;
  margin-bottom: 3px;
  padding-right: 4px;
  border: solid #ccc;
  border-width: 1px 0;
}

.splitter span {
  width: 2px;
  height: 2px;
  border: 1px solid #999;
  border-radius: 50%;
}

.panel-tabs {
  position: relative;
  display: flex;
  height: 32px;
  overflow: hidden;
}

.panel-tabs > button {
  width: 42px;
  box-sizing: border-box;
  border-right: 1px solid #999;
  border-bottom: 1px solid #aaa;
  background: #cfcfcf;
}

.panel-tabs > button.active {
  width: 40px;
  border-bottom: 0;
  background: #f7f7f7;
}

.tab-scroll {
  position: absolute;
  right: 0;
  bottom: 0;
  display: flex;
  gap: 1px;
  height: 13px;
}

.tab-scroll button {
  width: 12px;
  background: #f4f4f4;
}

.left::before,
.right::before {
  content: '';
  border: 2px solid transparent;
}

.left::before {
  border-right: 3px solid #222;
  border-left: 0;
}

.right::before {
  border-left: 3px solid #222;
  border-right: 0;
}

.filter {
  display: flex;
  align-items: center;
  height: 16px;
  margin-right: 3px;
  padding-left: 2px;
  border: solid #ccc;
  border-width: 1px 1px 1px 0;
}

.filter svg {
  fill: none;
}

.filter input {
  flex: 1;
  min-width: 0;
}

/* 17 equal rows */
.tree {
  display: grid;
  grid-auto-rows: 1fr;
  height: 262px;
  margin: 0;
  padding: 0;
  list-style: none;
  color: #111;
}

.tree li {
  display: flex;
  align-items: center;
  white-space: nowrap;
}

.tree .glyph {
  width: 14px;
  height: 14px;
  margin-right: 3px;
}

.tree .root .glyph {
  width: 13px;
  margin-right: 2px;
}

.tree .twist {
  width: 7px;
  margin-left: 2px;
  margin-right: 6px;
  display: flex;
}

.tree .child .twist {
  margin-right: 22px;
}

.twist.closed::before {
  content: '';
  margin-left: 1px;
  border: 2px solid transparent;
  border-left: 3px solid #555;
  border-right: 0;
}

.twist.open::before {
  content: '';
  border: 2px solid transparent;
  border-top: 3px solid #555;
  border-bottom: 0;
}

.rollback {
  height: 3px;
  background: #3b8bb0;
}

.keycast {
  align-self: flex-start;
  margin: auto 0 54px 55px;
  padding: 0 14px;
  border-radius: 22px;
  background: #0c807c;
  color: #d9f5f0;
  font-family: 'Liberation Mono', monospace;
  font-size: 19px;
  line-height: 44px;
}

.scrollbar {
  display: flex;
  height: 11px;
  background: #efefef;
}

.scrollbar button {
  width: 10px;
}

.scrollbar .track {
  flex: 1;
}

.scrollbar .thumb {
  width: 74%;
  height: 100%;
  background: #c9c9c9;
}

.handle {
  position: absolute;
  z-index: 1;
  right: -7px;
  top: 314px;
  width: 6px;
  height: 28px;
  border: 1px solid #bbb;
  background: #f7f7f7;
}

.handle::before {
  content: '';
  width: 2px;
  height: 2px;
  border: 1px solid #999;
  border-radius: 50%;
  flex-shrink: 0;
}

/* ===== Graphics area ===== */
.viewport {
  position: relative;
  flex: 1;
  min-width: 0;
  background: #fff;
  border-bottom: 1px solid #bbb;
}

.model {
  position: absolute;
  inset: 0;
  width: 100%;
  height: 100%;
}

.view-tools {
  position: relative;
  display: flex;
  align-items: center;
  justify-content: center;
  height: 35px;
  opacity: 0.85;
}

.view-tools .drop::before {
  border-top-color: #999;
}

.doc-buttons {
  position: absolute;
  top: 0;
  right: 2px;
  display: flex;
  color: #888;
}

.task-pane {
  position: absolute;
  top: 67px;
  right: 0;
  width: 28px;
  border: 1px solid #aaa;
  border-right: 0;
  box-sizing: border-box;
  background: #cfcfcf;
  overflow: hidden;
}

.task-pane button {
  width: 30px;
  height: 28px;
  box-sizing: border-box;
  border-bottom: 1px solid #aaa;
}

.task-pane button.active {
  background: #fff;
}

.triad {
  position: absolute;
  left: 20px;
  bottom: 25px;
  font-size: 8px;
}
</style>
